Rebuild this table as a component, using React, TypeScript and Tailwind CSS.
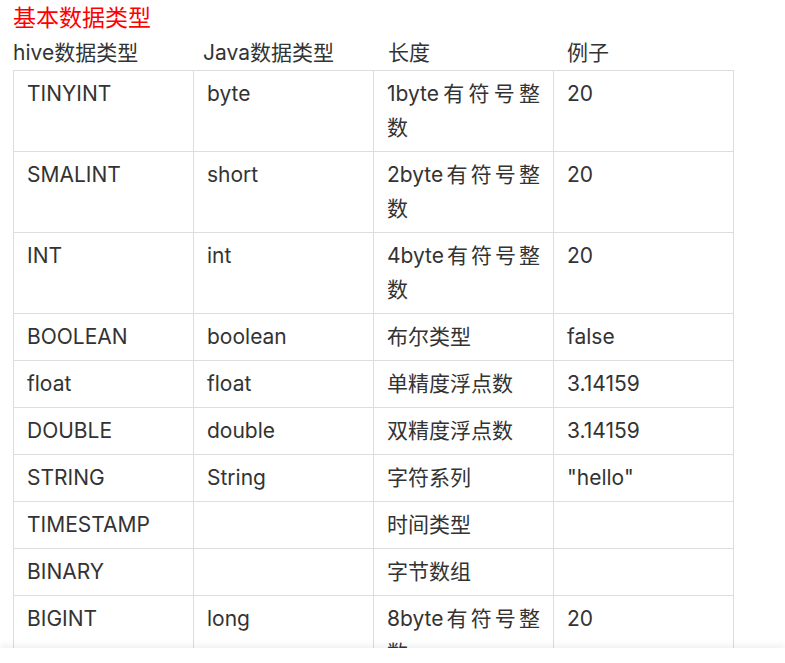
import React from 'react'

// Hive basic data types table

const headers = [
  { label: 'hive数据类型', width: 'w-[190px]' },
  { label: 'Java数据类型', width: 'w-[185px]' },
  { label: '长度', width: 'w-[179px]' },
  { label: '例子', width: 'w-[160px]' },
]

const rows: string[][] = [
  ['TINYINT', 'byte', '1byte有符号整数', '20'],
  ['SMALINT', 'short', '2byte有符号整数', '20'],
  ['INT', 'int', '4byte有符号整数', '20'],
  ['BOOLEAN', 'boolean', '布尔类型', 'false'],
  ['float', 'float', '单精度浮点数', '3.14159'],
  ['DOUBLE', 'double', '双精度浮点数', '3.14159'],
  ['STRING', 'String', '字符系列', '"hello"'],
  ['TIMESTAMP', '', '时间类型', ''],
  ['BINARY', '', '字节数组', ''],
  ['BIGINT', 'long', '8byte有符号整数', '20'],
]

export default function App() {
  return (
    <div
      className="relative h-screen overflow-hidden bg-white text-[#333] pl-[13px] pt-[3px]"
      style={{ fontFamily: 'Inter, "Noto Sans CJK SC", sans-serif' }}
    >
      <div className="text-[23px] leading-[30px] text-[#ff0000]">基本数据类型</div>

      <div className="flex pt-[3px] text-[21px] leading-[34px]">
        {headers.map((h) => (
          <div key={h.label} className={`${h.width} flex-none`}>{h.label}</div>
        ))}
      </div>

      <table className="table-fixed border-collapse w-[721px] text-[21px] leading-[34px]">
        <tbody>
          {rows.map((r, i) => (
            <tr key={i}>
              {r.map((c, j) => (
                <td
                  key={j}
                  className="border border-[#ddd] align-top px-[13px] py-[6px] text-justify"
                >
                  {c}
                </td>
              ))}
            </tr>
          ))}
        </tbody>
      </table>

      <div className="absolute left-0 right-0 bottom-0 h-[15px] bg-white shadow-[0_-3px_6px_rgba(0,0,0,0.06)]" />
    </div>
  )
}
